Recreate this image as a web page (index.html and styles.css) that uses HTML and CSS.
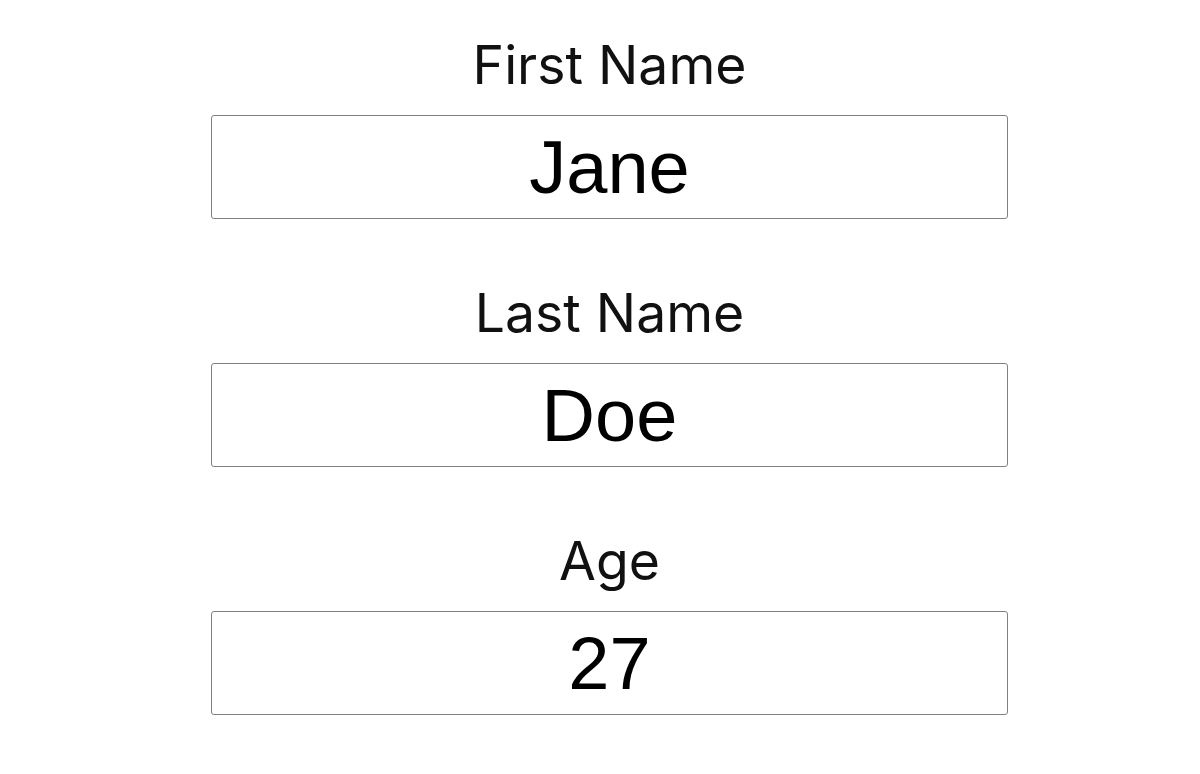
FILE: index.html
```html
<!DOCTYPE html>
<html lang="en">
<head>
    <meta charset="UTF-8">
    <meta name="viewport" content="width=device-width, initial-scale=1.0">
    <title>Person Form</title>
    <link rel="stylesheet" href="styles.css">
</head>
<body>
    <form class="person-form">
        <div class="field">
            <label for="firstName">First Name</label>
            <input type="text" id="firstName" value="Jane">
        </div>
        <div class="field">
            <label for="lastName">Last Name</label>
            <input type="text" id="lastName" value="Doe">
        </div>
        <div class="field">
            <label for="age">Age</label>
            <input type="text" id="age" value="27">
        </div>
    </form>
</body>
</html>
```

FILE: styles.css
```css
body {
    margin: 0;
    background-color: #fff;
    font-family: Inter, "Liberation Sans", sans-serif;
}
.person-form {
    width: 797px;
    margin-left: 211px;
}
.field {
    margin-bottom: 29px;
}
label {
    display: block;
    text-align: center;
    font-size: 53.5px;
    line-height: 60px;
    padding-top: 35px;
    padding-bottom: 20px;
    color: #111;
}
input[type="text"] {
    display: block;
    box-sizing: border-box;
    width: 100%;
    height: 104px;
    margin: 0;
    padding: 0;
    border: 1px solid #808080;
    border-radius: 3px;
    background-color: #fff;
    text-align: center;
    font-family: "Liberation Sans", Arial, sans-serif;
    font-size: 74px;
    color: #000;
    outline: none;
}
```
